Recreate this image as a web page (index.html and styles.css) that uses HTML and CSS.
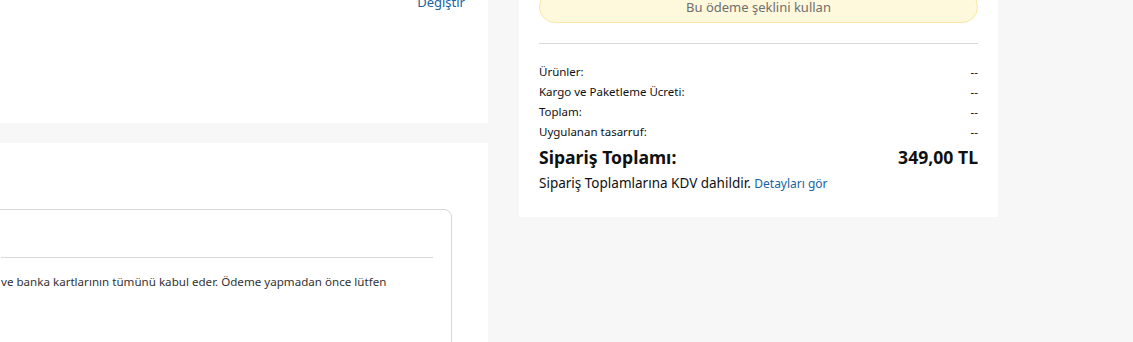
FILE: index.html
```html
<!DOCTYPE html>
<html lang="tr">
<head>
<meta charset="utf-8">
<link rel="stylesheet" href="styles.css">
</head>
<body>
<div class="page">
  <div class="left">
    <section class="panel panel-top">
      <a class="link change" href="#">Değiştir</a>
    </section>
    <section class="panel panel-bottom">
      <div class="pay-box">
        <div class="pay-head"></div>
        <div class="pay-text">ve banka kartlarının tümünü kabul eder. Ödeme yapmadan önce lütfen</div>
      </div>
    </section>
  </div>
  <aside class="right">
    <div class="card">
      <button class="use-btn" type="button">Bu ödeme şeklini kullan</button>
      <div class="divider"></div>
      <div class="rows">
        <div class="row"><span>Ürünler:</span><span>--</span></div>
        <div class="row"><span>Kargo ve Paketleme Ücreti:</span><span>--</span></div>
        <div class="row"><span>Toplam:</span><span>--</span></div>
        <div class="row"><span>Uygulanan tasarruf:</span><span>--</span></div>
      </div>
      <div class="total"><span>Sipariş Toplamı:</span><span>349,00 TL</span></div>
      <div class="vat">Sipariş Toplamlarına KDV dahildir. <a class="link small" href="#">Detayları gör</a></div>
    </div>
  </aside>
</div>
</body>
</html>
```

FILE: styles.css
```css
html, body {
  margin: 0;
  padding: 0;
}
body {
  background: #f7f7f7;
  font-family: "Noto Sans", "Open Sans", sans-serif;
  color: #0f1111;
  overflow: hidden;
  height: 342px;
}
.page {
  display: flex;
  gap: 31px;
  align-items: flex-start;
  margin-top: -20px;
}
.left {
  width: 488px;
  flex: none;
  display: flex;
  flex-direction: column;
  gap: 20px;
}
.panel {
  background: #fff;
}
.panel-top {
  height: 143px;
  display: flex;
  justify-content: flex-end;
  align-items: flex-start;
  padding-right: 23px;
  box-sizing: border-box;
}
.link {
  color: #2162a1;
  text-decoration: none;
}
.change {
  font-size: 13px;
  line-height: 20px;
  margin-top: 12px;
}
.panel-bottom {
  height: 260px;
  padding-top: 66px;
  padding-right: 36px;
  box-sizing: border-box;
}
.pay-box {
  margin-left: -20px;
  border: 1px solid #d5d9d9;
  border-radius: 8px;
  height: 300px;
  padding: 0 18px 0 20px;
}
.pay-head {
  height: 47px;
  border-bottom: 1px solid #d5d9d9;
}
.pay-text {
  font-size: 11.6px;
  line-height: 18px;
  margin-top: 15px;
  color: #333;
}
.right {
  width: 479px;
  flex: none;
}
.card {
  background: #fff;
  padding: 11px 20px 23px;
}
.use-btn {
  display: block;
  width: 100%;
  height: 32px;
  border: 1px solid #fbe7a3;
  border-radius: 16px;
  background: #fef8dc;
  color: #6f6f6f;
  font-family: inherit;
  font-size: 13px;
  padding: 0;
}
.divider {
  height: 1px;
  background: #d5d9d9;
  margin-top: 20px;
}
.rows {
  margin-top: 18px;
}
.row, .total {
  display: flex;
  justify-content: space-between;
}
.row {
  font-size: 11.5px;
  line-height: 20px;
}
.total {
  font-size: 17.6px;
  font-weight: 700;
  line-height: 24px;
  margin-top: 3px;
}
.vat {
  font-size: 13.5px;
  line-height: 20px;
  margin-top: 4px;
}
.small {
  font-size: 12px;
}
```
